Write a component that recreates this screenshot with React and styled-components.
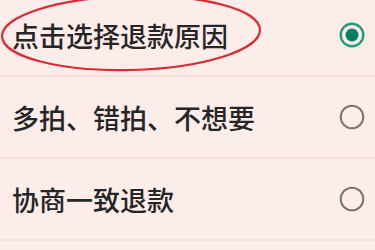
import React from "react";
import { useState } from "react";
import styled, { createGlobalStyle } from "styled-components";

const GlobalStyle = createGlobalStyle`
  html, body {
    margin: 0;
    padding: 0;
    background: #fcedea;
    overflow: hidden;
  }
`;

const reasons = ["点击选择退款原因", "多拍、错拍、不想要", "协商一致退款"];

const Radio = ({ checked }) => (
  <RadioBox>
    <svg width="26" height="26" viewBox="0 0 26 26">
      <circle
        cx="13"
        cy="13"
        r="11.3"
        fill="none"
        stroke={checked ? "#1f9a7b" : "#77776c"}
        strokeWidth={checked ? 2.4 : 2}
      />
      {checked ? <circle cx="13" cy="13" r="6.5" fill="#0d7b61" /> : null}
    </svg>
  </RadioBox>
);

const App = () => {
  const [selected, setSelected] = useState(0);

  return (
    <Page>
      <GlobalStyle />
      <List>
        {reasons.map((r, i) => (
          <Row key={r} onClick={() => setSelected(i)}>
            <Label>{r}</Label>
            <Radio checked={selected === i} />
          </Row>
        ))}
      </List>
      {/* red hand-drawn mark around the first row */}
      <Mark width="375" height="90" viewBox="0 0 375 90">
        <ellipse
          cx="131"
          cy="33"
          rx="129"
          ry="37"
          fill="none"
          stroke="#dc2a33"
          strokeWidth="2.2"
          transform="rotate(-1.5 131 33)"
        />
      </Mark>
    </Page>
  );
};

const Page = styled.div`
  position: relative;
  width: 375px;
  height: 250px;
  overflow: hidden;
  background: #fcedea;
  font-family: "Noto Sans CJK SC", "Noto Sans", sans-serif;
`;

const List = styled.ul`
  list-style: none;
  margin: -5px 0 0;
  padding: 0;
`;

const Row = styled.li`
  display: flex;
  align-items: center;
  justify-content: space-between;
  height: 82px;
  padding: 0 10px 0 12px;
  border-bottom: 2px solid #f4e2da;
  box-sizing: border-box;
`;

const Label = styled.span`
  font-size: 27px;
  font-weight: 500;
  color: #262626;
`;

const RadioBox = styled.span`
  display: flex;
  width: 26px;
  height: 26px;
`;

const Mark = styled.svg`
  position: absolute;
  left: 0;
  top: 0;
  pointer-events: none;
`;

export default App;
